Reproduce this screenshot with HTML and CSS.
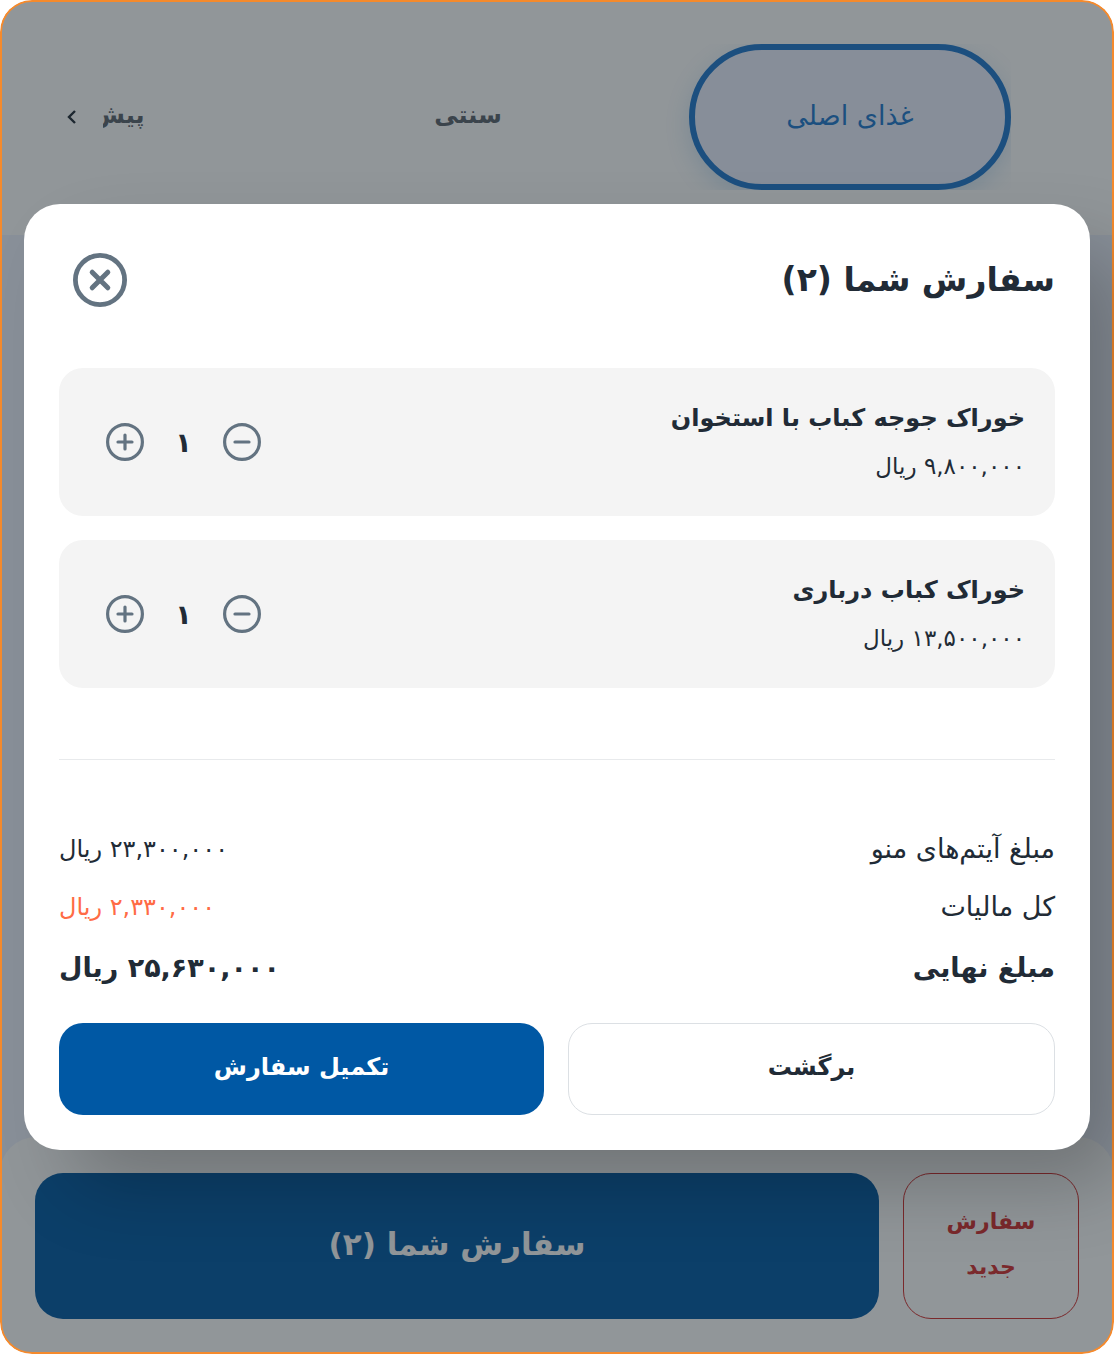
FILE: index.html
```
<!DOCTYPE html>
<html lang="fa" dir="rtl">
<head>
	<meta charset="utf-8">
	<meta name="viewport" content="width=device-width, initial-scale=1">
	<title>سفارش شما</title>

	<link rel="stylesheet" href="styles.css">

</head>
<body>

	<div class="app">
		<header class="categories">
			<nav class="tabs">
				<button type="button" class="tab active">غذای اصلی</button>
				<button type="button" class="tab">سنتی</button>
				<button type="button" class="tab">پیش‌غذاها</button>
			</nav>
			<button type="button" class="next" aria-label="بعدی">
				<svg width="10" height="16" viewBox="0 0 10 16"><path d="M8 2 2 8l6 6" fill="none" stroke="currentColor" stroke-width="2.4"/></svg>
			</button>
		</header>

		<main class="menu"></main>

		<footer class="bottom-bar">
			<button type="button" class="new-order">سفارش جدید</button>
			<button type="button" class="show-order">سفارش شما (۲)</button>
		</footer>

		<div class="overlay">
			<section class="dialog" role="dialog" aria-labelledby="title">
				<div class="dialog-head">
					<h1 id="title">سفارش شما (۲)</h1>
					<button type="button" class="close" aria-label="بستن">
						<svg width="54" height="54" viewBox="0 0 54 54" fill="none" stroke="currentColor"><circle cx="27" cy="27" r="24.6" stroke-width="4.8"/><path d="m19.2 19.2 15.6 15.6M34.8 19.2 19.2 34.8" stroke-width="5" stroke-linecap="round"/></svg>
					</button>
				</div>

				<ul class="items">
					<li class="item">
						<div class="info">
							<h2>خوراک جوجه کباب با استخوان</h2>
							<p>۹,۸۰۰,۰۰۰ ریال</p>
						</div>
						<div class="stepper">
							<button type="button" aria-label="کم کردن">
								<svg width="38" height="38" viewBox="0 0 38 38" fill="none" stroke="currentColor" stroke-width="3.2"><circle cx="19" cy="19" r="17.4"/><path d="M12 19h14" stroke-linecap="round"/></svg>
							</button>
							<span>۱</span>
							<button type="button" aria-label="اضافه کردن">
								<svg width="38" height="38" viewBox="0 0 38 38" fill="none" stroke="currentColor" stroke-width="3.2"><circle cx="19" cy="19" r="17.4"/><path d="M12 19h14M19 12v14" stroke-linecap="round"/></svg>
							</button>
						</div>
					</li>
					<li class="item">
						<div class="info">
							<h2>خوراک کباب درباری</h2>
							<p>۱۳,۵۰۰,۰۰۰ ریال</p>
						</div>
						<div class="stepper">
							<button type="button" aria-label="کم کردن">
								<svg width="38" height="38" viewBox="0 0 38 38" fill="none" stroke="currentColor" stroke-width="3.2"><circle cx="19" cy="19" r="17.4"/><path d="M12 19h14" stroke-linecap="round"/></svg>
							</button>
							<span>۱</span>
							<button type="button" aria-label="اضافه کردن">
								<svg width="38" height="38" viewBox="0 0 38 38" fill="none" stroke="currentColor" stroke-width="3.2"><circle cx="19" cy="19" r="17.4"/><path d="M12 19h14M19 12v14" stroke-linecap="round"/></svg>
							</button>
						</div>
					</li>
				</ul>

				<dl class="summary">
					<div class="row">
						<dt>مبلغ آیتم‌های منو</dt>
						<dd>۲۳,۳۰۰,۰۰۰ ریال</dd>
					</div>
					<div class="row tax">
						<dt>کل مالیات</dt>
						<dd>۲,۳۳۰,۰۰۰ ریال</dd>
					</div>
					<div class="row total">
						<dt>مبلغ نهایی</dt>
						<dd>۲۵,۶۳۰,۰۰۰ ریال</dd>
					</div>
				</dl>

				<div class="actions">
					<button type="button" class="back">برگشت</button>
					<button type="button" class="complete">تکمیل سفارش</button>
				</div>
			</section>
		</div>
	</div>

</body>
</html>
```
FILE: styles.css
```
* {
	box-sizing: border-box;
}

body {
	margin: 0;
	background: #ffffff;
	color: #212b36;
	font-family: "DejaVu Sans", sans-serif;
}

h1, h2, p, ul, dl, dd {
	margin: 0;
	padding: 0;
}

button {
	padding: 0;
	border: none;
	background: none;
	color: inherit;
	font-family: inherit;
	font-weight: bold;
	cursor: pointer;
}

svg {
	display: block;
}

.app {
	position: relative;
	display: flex;
	flex-direction: column;
	min-height: 100vh;
	border-radius: 32px;
	background: #f0f3ff;
	overflow: hidden;
}

/* category tabs */
.categories {
	display: flex;
	align-items: center;
	gap: 24px;
	padding: 44px 103px 45px 64px;
	background: #ffffff;
}

.tabs {
	display: flex;
	flex: 1;
	gap: 60px;
	min-width: 0;
	overflow: hidden;
}

.tab {
	flex: none;
	width: 322px;
	height: 146px;
	padding-bottom: 4px;
	border-radius: 73px;
	color: #5a636c;
	font-size: 24px;
}

.tab.active {
	border: 6px solid #2078ce;
	background: #ecf0ff;
	box-shadow: 0 8px 24px rgba(32, 120, 206, 0.2);
	color: #2078ce;
	font-size: 27px;
	font-weight: normal;
}

.next {
	width: 15px;
}

.next svg {
	margin: 0 auto;
}

.menu {
	flex: 1;
}

/* bottom bar */
.bottom-bar {
	display: flex;
	gap: 24px;
	padding: 36px 35px 35px;
	border-radius: 36px 36px 0 0;
	background: #ffffff;
}

.bottom-bar button {
	height: 146px;
	border-radius: 28px;
}

.new-order {
	width: 176px;
	padding: 0 36px 5px;
	border: 1px solid #d32f2f;
	color: #d32f2f;
	font-size: 22px;
	line-height: 45px;
}

.show-order {
	flex: 1;
	padding-bottom: 4px;
	background: #0058a4;
	color: #ffffff;
	font-size: 31px;
}

/* order dialog */
.overlay {
	position: absolute;
	inset: 0;
	display: flex;
	align-items: center;
	justify-content: center;
	padding: 22px;
	border: 2px solid #f58a2c;
	border-radius: 32px;
	background: rgba(26, 36, 42, 0.48);
}

.dialog {
	width: 100%;
	padding: 35px;
	border-radius: 36px;
	background: #ffffff;
	box-shadow: 40px 40px 80px -8px rgba(0, 0, 0, 0.24);
}

.dialog-head {
	display: flex;
	align-items: center;
	justify-content: space-between;
	height: 81px;
	padding-left: 14px;
}

.dialog-head h1 {
	font-size: 33px;
	line-height: 56px;
}

.close {
	color: #637381;
}

.items {
	display: grid;
	gap: 24px;
	padding: 48px 0 71px;
	border-bottom: 1px solid #e8eaec;
	list-style: none;
}

.item {
	display: flex;
	align-items: center;
	justify-content: space-between;
	height: 148px;
	padding: 0 30px 0 47px;
	border-radius: 24px;
	background: #f4f4f4;
}

.item h2 {
	font-size: 24px;
	line-height: 48px;
}

.item p {
	font-size: 23px;
	line-height: 48px;
}

.stepper {
	display: flex;
	align-items: center;
	color: #637381;
}

.stepper span {
	width: 79px;
	color: #212b36;
	font-size: 27px;
	font-weight: bold;
	text-align: center;
}

.summary {
	padding: 60px 0 23px;
}

.row {
	display: flex;
	justify-content: space-between;
	font-size: 24px;
	line-height: 58px;
}

.row dt {
	font-size: 27px;
}

.tax dd {
	color: #ff6b45;
}

.total {
	font-size: 27px;
	font-weight: bold;
	line-height: 64px;
}

.actions {
	display: flex;
	gap: 24px;
}

.actions button {
	flex: 1;
	height: 92px;
	padding-bottom: 4px;
	border-radius: 24px;
	font-size: 24px;
}

.actions .back {
	border: 1px solid #dce0e4;
}

.actions .complete {
	background: #0058a4;
	color: #ffffff;
}
```
